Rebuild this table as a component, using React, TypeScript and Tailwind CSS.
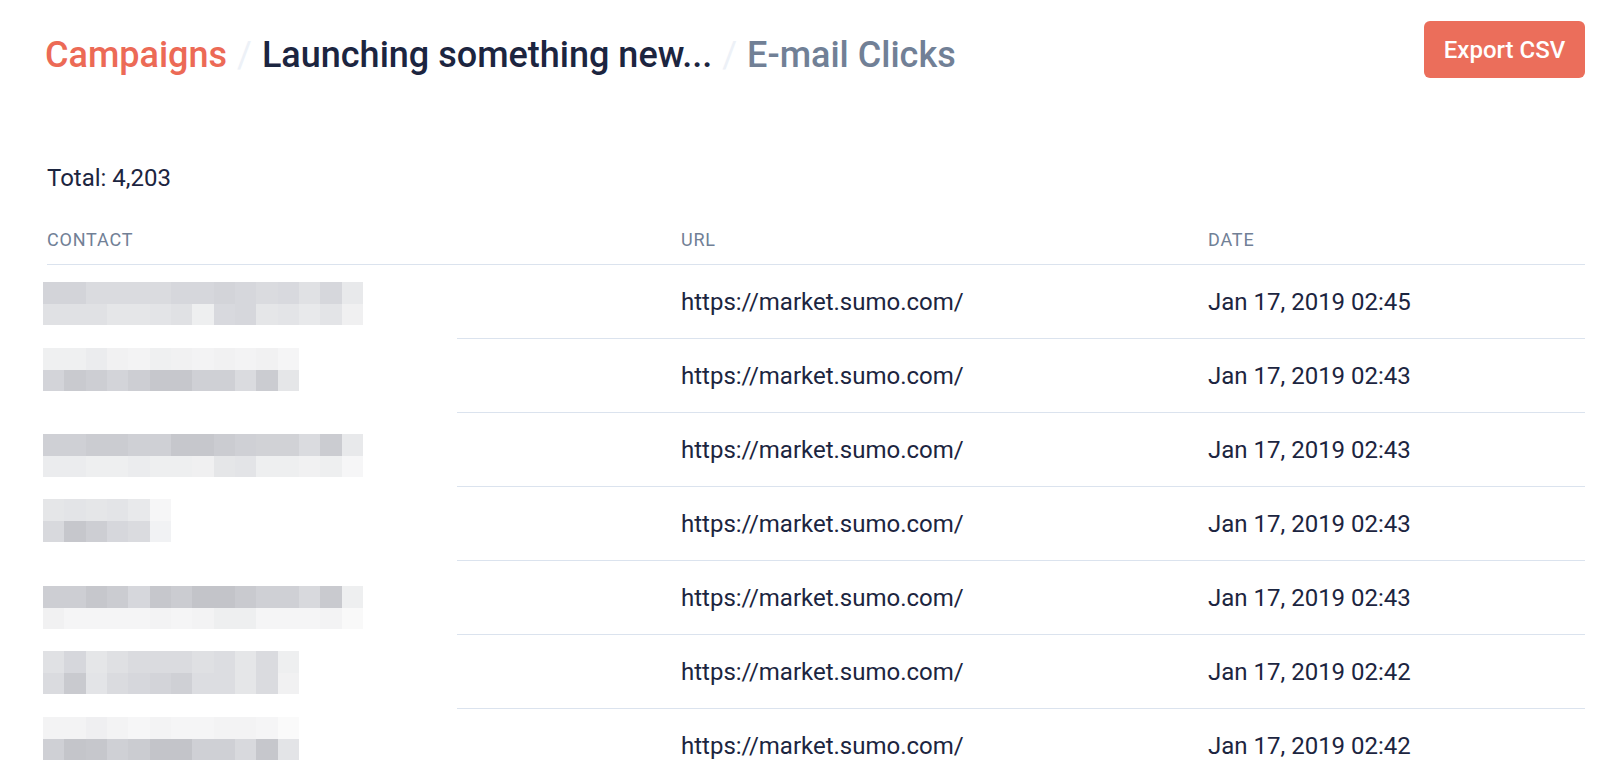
import React from 'react';

// ── Data ───────────────────────────────────────────────────────────────────
// Each contact is redacted in the screenshot: two rows of grey mosaic cells.
type Click = {
  mosaic: [string[], string[]];
  shift: number;
  url: string;
  date: string;
};

const clicks: Click[] = [
  {
    mosaic: [
      ['d3d4d9', 'd3d4d9', 'dadbdf', 'dadbdf', 'dadbdf', 'dadbdf', 'd6d7dc', 'd6d7dc', 'd3d4d9', 'd6d7dc', 'dadbdf', 'd8d9de', 'e0e1e4', 'd6d7dc', 'e8e9eb'],
      ['e0e1e4', 'e0e1e4', 'e0e1e4', 'e5e6e8', 'e5e6e8', 'e3e4e7', 'e0e1e4', 'eeeff0', 'd8d9de', 'd6d7dc', 'e5e6e8', 'e3e4e7', 'e8e9eb', 'e3e4e7', 'f0f0f1'],
    ],
    shift: 2,
    url: 'https://market.sumo.com/',
    date: 'Jan 17, 2019 02:45',
  },
  {
    mosaic: [
      ['eff0f1', 'eff0f1', 'ebecee', 'f1f1f2', 'f3f3f4', 'eff0f1', 'f1f1f2', 'f3f3f4', 'f1f1f2', 'f3f3f4', 'f1f1f2', 'f5f5f6'],
      ['d3d4d9', 'c9cacf', 'cdced3', 'd3d4d9', 'cdced3', 'c6c7cc', 'c6c7cc', 'cfd0d5', 'cfd0d5', 'dadbdf', 'cbccd1', 'e5e6e8'],
    ],
    shift: -6,
    url: 'https://market.sumo.com/',
    date: 'Jan 17, 2019 02:43',
  },
  {
    mosaic: [
      ['cfd0d5', 'cfd0d5', 'cbccd1', 'cbccd1', 'cfd0d5', 'cfd0d5', 'c6c7cc', 'c6c7cc', 'cbccd1', 'cfd0d5', 'd1d2d6', 'd1d2d6', 'dadbdf', 'cbccd1', 'e8e9eb'],
      ['ebecee', 'ebecee', 'eeeff0', 'eeeff0', 'ebecee', 'eeeff0', 'eeeff0', 'f0f0f1', 'e5e6e8', 'e3e4e7', 'eeeff0', 'eeeff0', 'f1f1f2', 'eeeff0', 'f6f6f7'],
    ],
    shift: 6,
    url: 'https://market.sumo.com/',
    date: 'Jan 17, 2019 02:43',
  },
  {
    mosaic: [
      ['e5e6e8', 'e3e4e7', 'e5e6e8', 'e3e4e7', 'e8e9eb', 'f6f6f7'],
      ['d8d9dd', 'c6c7cc', 'cdced3', 'd6d7dc', 'dadbdf', 'f1f2f4'],
    ],
    shift: -3,
    url: 'https://market.sumo.com/',
    date: 'Jan 17, 2019 02:43',
  },
  {
    mosaic: [
      ['cdced3', 'cdced3', 'c6c7cc', 'cbccd1', 'd6d7dc', 'c6c7cc', 'cbccd1', 'c3c4c9', 'c3c4c9', 'c9cacf', 'cfd0d5', 'cfd0d5', 'd8d9dd', 'c9cacf', 'eeeff0'],
      ['f1f1f2', 'f5f5f6', 'f5f5f6', 'f5f5f6', 'f5f5f6', 'f3f3f4', 'f5f5f6', 'f3f3f4', 'eeeff0', 'eeeff0', 'f5f5f6', 'f5f5f6', 'f5f5f6', 'f3f3f4', 'f9f9f9'],
    ],
    shift: 10,
    url: 'https://market.sumo.com/',
    date: 'Jan 17, 2019 02:43',
  },
  {
    mosaic: [
      ['e0e1e4', 'd6d7dc', 'e5e6e8', 'dfe0e3', 'dadbdf', 'dadbdf', 'dadbdf', 'dfe0e3', 'dcdde1', 'e5e6e8', 'dadbdf', 'eeeff0'],
      ['dadbdf', 'c9cacf', 'e3e4e7', 'dadbdf', 'd6d7dc', 'd3d4d9', 'cfd0d5', 'dcdde1', 'dcdde1', 'e5e6e8', 'dadbdf', 'f1f1f2'],
    ],
    shift: 1,
    url: 'https://market.sumo.com/',
    date: 'Jan 17, 2019 02:42',
  },
  {
    mosaic: [
      ['f3f3f4', 'f3f3f4', 'efeff1', 'f3f3f4', 'f6f6f7', 'f3f3f4', 'f5f5f6', 'f5f5f6', 'f3f3f4', 'f3f3f4', 'f5f5f6', 'fafafa'],
      ['cfd0d5', 'c4c5ca', 'c6c7cc', 'cfd0d5', 'cbccd1', 'c3c4c9', 'c3c4c9', 'cfd0d5', 'cfd0d5', 'd8d9dd', 'c6c7cc', 'e3e4e7'],
    ],
    shift: -7,
    url: 'https://market.sumo.com/',
    date: 'Jan 17, 2019 02:42',
  },
];

const Mosaic: React.FC<{ rows: [string[], string[]]; shift: number }> = ({ rows, shift }) => (
  <div className="-ml-[4px] flex flex-col" style={{ transform: `translateY(${shift}px)` }}>
    {rows.map((row, r) => (
      <div key={r} className="flex">
        {row.map((c, i) => (
          <div key={i} className="h-[21.5px] w-[21.33px]" style={{ backgroundColor: `#${c}` }} />
        ))}
      </div>
    ))}
  </div>
);

export default function App() {
  return (
    <div className="min-h-screen bg-white pl-[47px] pr-[15px] font-['Roboto',sans-serif] text-[#1c2540]">
      {/* Breadcrumb + export */}
      <header className="flex h-[85px] items-start justify-between pt-[21px]">
        <h1 className="mt-[6px] -ml-[2px] flex items-center gap-[10px] text-[36px] font-medium leading-[57px]">
          <span className="text-[#ec6a56]">Campaigns</span>
          <span className="font-normal text-[#edf1f7]">/</span>
          <span className="text-[#1c2540]">Launching something new...</span>
          <span className="font-normal text-[#edf1f7]">/</span>
          <span className="text-[#718096]">E-mail Clicks</span>
        </h1>
        <button className="h-[57px] w-[161px] rounded-[6px] bg-[#eb6e5b] text-[24px] font-medium text-white">
          Export CSV
        </button>
      </header>

      <p className="mt-[79px] text-[24px] leading-[28px]">Total: 4,203</p>

      {/* Clicks table */}
      <div className="mt-[36px]">
        <div className="grid grid-cols-[634px_527px_1fr] border-b border-[#dbe3ee] pb-[12px] text-[18px] leading-[24px] tracking-[0.8px] text-[#718096]">
          <div>CONTACT</div>
          <div>URL</div>
          <div>DATE</div>
        </div>
        {clicks.map((c, i) => (
          <div key={i}>
            {i > 0 && <div className="ml-[410px] h-px bg-[#dbe3ee]" />}
            <div className="grid h-[73px] grid-cols-[634px_527px_1fr] items-center text-[24px]">
              <Mosaic rows={c.mosaic} shift={c.shift} />
              <div>{c.url}</div>
              <div>{c.date}</div>
            </div>
          </div>
        ))}
      </div>
    </div>
  );
}
